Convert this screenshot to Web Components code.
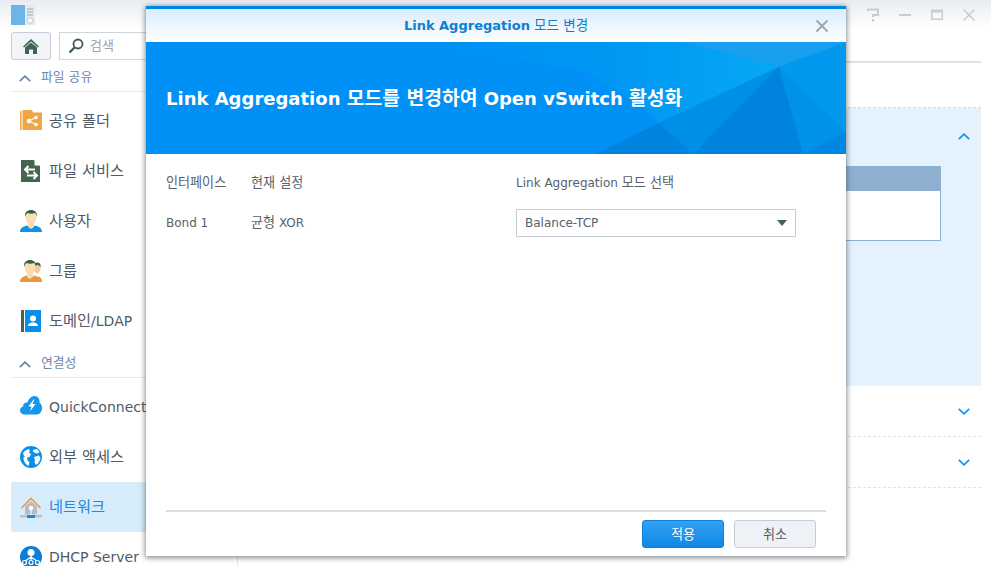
<!DOCTYPE html>
<html lang="ko">
<head>
<meta charset="utf-8">
<title>Link Aggregation</title>
<style>
html, body { margin: 0; height: 100%; overflow: hidden; background: #fff; }
body { font: 13px "DejaVu Sans", "Noto Sans CJK KR", sans-serif; color: #4f5b66; }
</style>
</head>
<body>
<dsm-window>
  <dsm-sidebar slot="side">
    <nav-section>파일 공유</nav-section>
    <nav-item icon="folder"><ko-t>공유 폴더</ko-t></nav-item>
    <nav-item icon="service"><ko-t>파일 서비스</ko-t></nav-item>
    <nav-item icon="user"><ko-t>사용자</ko-t></nav-item>
    <nav-item icon="group"><ko-t>그룹</ko-t></nav-item>
    <nav-item icon="domain"><ko-t>도메인</ko-t>/LDAP</nav-item>
    <nav-section>연결성</nav-section>
    <nav-item icon="cloud">QuickConnect</nav-item>
    <nav-item icon="globe"><ko-t>외부 액세스</ko-t></nav-item>
    <nav-item icon="house" active><ko-t>네트워크</ko-t></nav-item>
    <nav-item icon="dhcp">DHCP Server</nav-item>
  </dsm-sidebar>
  <dsm-main slot="main"></dsm-main>
</dsm-window>

<mode-dialog>
  <span slot="title"><b>Link Aggregation</b> <ko-t>모드 변경</ko-t></span>
  <span slot="banner">Link Aggregation <ko-t>모드를 변경하여</ko-t> Open vSwitch <ko-t>활성화</ko-t></span>
  <bond-form></bond-form>
  <dsm-button slot="footer" primary><ko-t>적용</ko-t></dsm-button>
  <dsm-button slot="footer"><ko-t>취소</ko-t></dsm-button>
</mode-dialog>

<script>
const icons = {
  folder: `<path fill="#f0a547" d="M0 1h1.500v19H0zM2.500 0h9l2 2.500H22V20H2.500z"/><g fill="#fff"><circle cx="9" cy="11" r="2.300"/><circle cx="16" cy="7.500" r="1.800"/><circle cx="16" cy="14.500" r="1.800"/><path d="M9 10.300 16 7v1.300l-7 3.300zM9 10.500l7 3.400v1.200l-7-3.400z"/></g>`,
  service: `<path fill="#44654f" d="M1 0h13l6 6v16H1z"/><path fill="#fff" d="M14.500 0 20 5.500h-5.500z"/><path fill="none" stroke="#fff" stroke-width="2" d="M5 9.500h10M8.500 6l-3.500 3.500L8.500 13M17 15.500H7M13.500 12l3.500 3.500-3.500 3.500"/>`,
  user: `<path fill="#0a93e8" d="M0 22c0-4 3-5.500 7-6.500l4 2.500 4-2.500c4 1 7 2.500 7 6.500z"/><path fill="#fcdcb4" d="M5.500 6c0-4 2.500-5 5.500-5s5.500 1 5.500 5c0 4-2 9-5.500 9.500C7.500 15 5.500 10 5.500 6z"/><path fill="#fcdcb4" d="M8 13h6v4l-3 2-3-2z"/><path fill="#3b5f4a" d="M5 7c-.5-5 2.500-7 6-7s6.500 2 6 7c-.5-2-1-3.500-2-4-2 1-5.500 1-7.500 0-1 .7-2 2-2.500 4z"/>`,
  group: `<path fill="#e8973f" d="M13 22c.5-3 2-5 5-5.500 2.500 .5 4 2 4 5.500z"/><path fill="#f7c896" d="M14 7.500c0-3 1.500-4 3.500-4s3 1.500 3 4-1.500 6-3 6-3.500-3-3.500-6z"/><path fill="#3b5f4a" d="M14 6c.5-3 2-4 4-3.500s3 2 2.500 4.500c-1-1.500-2-2-3.500-2z"/><path fill="#e8973f" d="M0 22c0-4 3-5.500 6.500-6.500l4 2 4-2c2 .6 3.500 1.500 4.500 3v3.500z"/><path fill="#fcdcb4" d="M4.500 6c0-4 2.500-5 5.500-5s5.500 1 5.500 5-2 9-5.500 9.500C6.500 15 4.500 10 4.500 6z"/><path fill="#fcdcb4" d="M7 13h6v4l-3 2-3-2z"/><path fill="#3b5f4a" d="M4 7C3.500 2 6.500 0 10 0s6.500 2 6 7c-.5-2-1-3.500-2-4-2 1-5.500 1-7.500 0-1 .7-2 2-2.500 4z"/>`,
  domain: `<path fill="#44654f" d="M1 0h3v22H1z"/><path fill="#0a8fe8" d="M5 0h16v22H5z"/><circle cx="13" cy="8.500" r="3" fill="#fff"/><path fill="#fff" d="M8 16c0-2.500 2-3 3.500-3.500h3C16 13 18 13.500 18 16z"/>`,
  cloud: `<path fill="#1598ea" d="M4.500 18.500C2 18.500 0 16.800 0 14.500c0-2 1.200-3.500 3-4C3 7.500 5.500 6 7.500 6.500 8.500 3 11 0 14.500 0c3.500 0 5.500 3 5 6.500C21 7.500 22 9.500 22 12c0 3.500-2 6.500-5 6.500z"/><path fill="#fff" d="M13.500 3.500 8.500 10.500h3l-1.500 5 5.500-7.500h-3l2-4.500z"/>`,
  globe: `<circle cx="11" cy="11" r="11" fill="#0a8fe8"/><path fill="#fff" d="M4 5.500 8.500 3l1.500 1.500-1 2 2 1.500-1.500 3-2.500 .5.500 3 2 1.500-1 4C5 18 3 14 3.500 11l1.500 0L3 8zM13 4l4-1 2.500 3-2 1.500-2.500-.5-2-1.500zM14 11l5-1.500 1.500 2.500c-.5 3-2 5-4 7l-2-2 .5-3z"/>`,
  house: `<path fill="#b6bcc4" d="M5 10.500 11 5l6 5.500v8H5z"/><path fill="none" stroke="#ef9a3c" stroke-width="1.700" d="M1.500 12 11 2.500l9.500 9.500"/><circle cx="11" cy="12" r="2.200" fill="#fff"/><path fill="#fff" d="M10.500 13h1v6h-1z"/><path fill="#bfc4ca" d="M0 19h22v2.500H0z"/><path fill="#0a8fe8" d="M7 19h8v3.500H7z"/>`,
  dhcp: `<circle cx="11" cy="11" r="11" fill="#0a7fd8"/><circle cx="11" cy="6.500" r="3.500" fill="#fff"/><path fill="none" stroke="#fff" stroke-width="1.200" d="M11 9v6M11 11 4.500 15.500M11 11l6.500 4.500"/><g fill="#0a7fd8" stroke="#fff" stroke-width="1.200"><circle cx="4.500" cy="16.500" r="2"/><circle cx="11" cy="16.500" r="2"/><circle cx="17.500" cy="16.500" r="2"/></g>`
};

const chevron = (up, color, size) => `<svg width="${size}" height="${Math.round(size * 0.6)}" viewBox="0 0 12 7"><path fill="none" stroke="${color}" stroke-width="1.800" d="${up ? 'M.8 6.200 6 1.200l5.200 5' : 'M.8 .8 6 5.800l5.200-5'}"/></svg>`;

// hangul runs a touch wider than the latin next to them
class KoT extends HTMLElement {
  connectedCallback() {
    const sR = this.attachShadow({ mode: 'open' });
    sR.innerHTML = `<style>:host { display: inline; font-size: var(--ko-size, 1.09em); }</style><slot></slot>`;
  }
}

class DsmWindow extends HTMLElement {
  connectedCallback() {
    const sR = this.attachShadow({ mode: 'open' });
    sR.innerHTML = `
    <style>
    :host { display: flex; flex-direction: column; height: 566px; width: 991px; overflow: hidden; }
    .bar { display: flex; align-items: flex-start; height: 28px; flex: none; padding-left: 11px;
      background: linear-gradient(#e8ecf2, #fff); }
    .app { width: 24px; height: 20px; margin-top: 5px; flex: none; }
    .ctl { margin-left: auto; display: flex; gap: 16px; padding: 8px 14px 0 0; }
    .ctl svg { display: block; }
    .row { display: flex; flex: 1; min-height: 0; }
    </style>
    <div class="bar">
      <svg class="app" viewBox="0 0 24 20"><path fill="#6cb4ea" d="M0 0h14v20H0z"/><path fill="#e6eaee" d="M14 0h10v20H14z"/><path stroke="#9aa5ae" d="M16 4h6M16 7h6M16 10h6"/><circle cx="19" cy="15.500" r="2.800" fill="#f7f9fa" stroke="#c5ccd2"/></svg>
      <div class="ctl">
        <svg width="16" height="14" viewBox="0 0 16 14" fill="none" stroke="#c9cdd1" stroke-width="2"><path d="M3 3V1.500h10V7H8v2M8 11v2.500"/></svg>
        <svg width="16" height="14" viewBox="0 0 16 14"><path stroke="#c9cdd1" stroke-width="2" d="M2 7h12"/></svg>
        <svg width="16" height="14" viewBox="0 0 16 14" fill="none" stroke="#c9cdd1"><path stroke-width="3" d="M2 3h12"/><path stroke-width="1.500" d="M2.700 2v9.300h10.600V2"/></svg>
        <svg width="16" height="14" viewBox="0 0 16 14"><path stroke="#c9cdd1" stroke-width="1.600" d="M2.500 1.500 13.500 12.500M13.500 1.500 2.500 12.500"/></svg>
      </div>
    </div>
    <div class="row"><slot name="side"></slot><slot name="main"></slot></div>`;
  }
}

class DsmSidebar extends HTMLElement {
  connectedCallback() {
    const sR = this.attachShadow({ mode: 'open' });
    sR.innerHTML = `
    <style>
    :host { display: block; width: 238px; flex: none; box-sizing: border-box; padding-left: 11px; overflow: hidden; border-right: 1px solid #e3e6ea; }
    .tools { display: flex; gap: 8px; padding-top: 4px; height: 28px; }
    .home { width: 38px; height: 26px; border: 1px solid #c6ced8; border-radius: 3px; background: #f1f5f9;
      display: flex; align-items: center; justify-content: center; }
    .search { flex: 1; margin-right: 8px; height: 26px; border: 1px solid #cfd5db; display: flex; align-items: center; gap: 6px; padding-left: 8px; font-size: 13px; color: #9aa3ab; line-height: 16px; }
    </style>
    <div class="tools">
      <div class="home"><svg width="16" height="15" viewBox="0 0 16 15"><path fill="#3f6350" d="M8 0 16 7.500l-1 1L8 2.500 1 8.500l-1-1z"/><path fill="#3f6350" d="M8 3.500 14 8.500V15H10V10.500H6V15H2V8.500z"/></svg></div>
      <div class="search"><svg width="16" height="16" viewBox="0 0 16 16"><circle cx="10" cy="6" r="4.500" fill="none" stroke="#3f5e4f" stroke-width="1.800"/><path stroke="#3f5e4f" stroke-width="2.400" d="M6.500 9.500 1.500 14.500"/></svg><span>검색</span></div>
    </div>
    <slot></slot>`;
  }
}

class NavSection extends HTMLElement {
  connectedCallback() {
    const sR = this.attachShadow({ mode: 'open' });
    sR.innerHTML = `
    <style>
    :host { display: flex; align-items: center; gap: 10px; height: 32px; box-sizing: border-box; padding: 3px 0 0 8px; margin-bottom: 4px;
      border-bottom: 1px solid #e6e8eb; font-size: 12.800px; color: #6c87ab; line-height: 16px; }
    svg { margin-top: 2px; }
    </style>
    ${chevron(true, '#6c87ab', 12)}<slot></slot>`;
  }
}

class NavItem extends HTMLElement {
  connectedCallback() {
    const sR = this.attachShadow({ mode: 'open' });
    sR.innerHTML = `
    <style>
    :host { display: flex; align-items: center; gap: 7px; height: 50px; padding-left: 9px; border-radius: 3px 0 0 3px;
      font-size: 14px; line-height: 18px; color: #4f5b66; white-space: nowrap; }
    :host([active]) { background: #d6ecfb; color: #1a8be0; }
    svg { flex: none; }
    .t { display: block; }
    </style>
    <svg width="22" height="22" viewBox="0 0 22 22">${icons[this.getAttribute('icon')] || ''}</svg><span class="t"><slot></slot></span>`;
  }
}

class DsmMain extends HTMLElement {
  connectedCallback() {
    const sR = this.attachShadow({ mode: 'open' });
    sR.innerHTML = `
    <style>
    :host { display: block; flex: 1; min-width: 0; padding-right: 10px; }
    .top { height: 33px; border-bottom: 2px solid #dde0e4; }
    .tabs { height: 44px; border-bottom: 1px dashed #d6d9dd; }
    .open { height: 278px; background: #e3f2fd; box-sizing: border-box; padding: 58px 40px 0 20px; position: relative; }
    .grid { height: 75px; box-sizing: border-box; border: 1px solid #8fb0d2; background: #fff; }
    .grid div { height: 24px; background: #8fafd0; }
    .row { height: 50px; border-bottom: 1px dashed #e3e4e8; display: flex; align-items: center; justify-content: flex-end; padding-right: 11px; }
    .chev { position: absolute; right: 11px; top: 20px; }
    </style>
    <div class="top"></div>
    <div class="tabs"></div>
    <div class="open"><span class="chev">${chevron(true, '#1a96ee', 12)}</span><div class="grid"><div></div></div></div>
    <div class="row">${chevron(false, '#1a96ee', 12)}</div>
    <div class="row">${chevron(false, '#1a96ee', 12)}</div>`;
  }
}

class ModeDialog extends HTMLElement {
  connectedCallback() {
    const sR = this.attachShadow({ mode: 'open' });
    sR.innerHTML = `
    <style>
    :host { position: absolute; left: 146px; top: 6px; width: 700px; height: 550px; display: flex; flex-direction: column;
      background: #fff; box-shadow: 0 1px 5px 1px rgba(60, 66, 72, .6); }
    .title { flex: none; height: 33px; box-sizing: content-box; border-top: 3px solid #0086e5; display: flex; align-items: center; justify-content: center;
      background: linear-gradient(#d8ecfc, #fff); color: #0b7fd6; font-size: 13px; position: relative; --ko-size: 1.04em; line-height: 16px; }
    .close { position: absolute; right: 17px; top: 10px; }
    .banner { flex: none; height: 112px; position: relative; display: flex; align-items: center; padding-left: 20px;
      background: #0090f6; color: #fff; font-size: 18px; font-weight: bold; overflow: hidden; line-height: 22px; --ko-size: 1.07em; }
    .banner svg { position: absolute; left: 0; top: 0; }
    .banner span { position: relative; top: 1px; }
    .body { flex: 1; padding: 0 20px; }
    .foot { flex: none; margin: 0 20px; height: 36px; border-top: 2px solid #dadde1; display: flex; justify-content: flex-end;
      align-items: flex-start; gap: 10px; padding: 8px 10px 0 0; }
    </style>
    <div class="title"><slot name="title"></slot>
      <svg class="close" width="14" height="14" viewBox="0 0 14 14"><path stroke="#a2a8ad" stroke-width="2" d="M1.500 1.500 12.500 12.500M12.500 1.500 1.500 12.500"/></svg>
    </div>
    <div class="banner">
      <svg width="700" height="112" viewBox="0 0 700 112">
        <defs><linearGradient id="lite" x1="0" y1="0" x2="1" y2="0"><stop offset="0" stop-color="#0090f6"/><stop offset=".55" stop-color="#0098f3"/><stop offset="1" stop-color="#06a8f4"/></linearGradient></defs>
        <path fill="url(#lite)" d="M280 0H537L633 25 513 81 497 65 440 30z"/>
        <path fill="#18a0ee" d="M537 0H700L633 25z"/>
        <path fill="#0099ee" d="M633 25 700 0V90z"/>
        <path fill="#0092e9" d="M633 25 700 90 657 112z"/>
        <path fill="#008fe6" d="M513 81 633 25 547 112z"/>
        <path fill="#0083dd" d="M633 25 657 112H547z"/>
        <path fill="#0083dd" d="M513 81 547 112H450z"/>
        <path fill="#0087df" d="M657 112 700 90V112z"/>
      </svg>
      <span><slot name="banner"></slot></span>
    </div>
    <div class="body"><slot></slot></div>
    <div class="foot"><slot name="footer"></slot></div>`;
  }
}

class BondForm extends HTMLElement {
  connectedCallback() {
    const sR = this.attachShadow({ mode: 'open' });
    sR.innerHTML = `
    <style>
    :host { display: grid; grid-template-columns: 85px 265px 280px; grid-template-rows: 55px 28px; align-items: center;
      font-size: 12px; color: #56616b; line-height: 16px; }
    .head { padding-top: 2px; }
    .sel { height: 28px; box-sizing: border-box; border: 1px solid #c7ccd3; display: flex; align-items: center;
      justify-content: space-between; padding: 0 8px; }
    .arrow { width: 0; height: 0; border: 5px solid transparent; border-top: 6px solid #44654f; border-bottom: 0; }
    </style>
    <div class="head"><ko-t>인터페이스</ko-t></div><div class="head"><ko-t>현재 설정</ko-t></div><div class="head">Link Aggregation <ko-t>모드 선택</ko-t></div>
    <div>Bond 1</div><div><ko-t>균형</ko-t> XOR</div>
    <div class="sel"><span>Balance-TCP</span><i class="arrow"></i></div>`;
  }
}

class DsmButton extends HTMLElement {
  connectedCallback() {
    const sR = this.attachShadow({ mode: 'open' });
    sR.innerHTML = `
    <style>
    :host { display: flex; align-items: center; justify-content: center; width: 82px; height: 28px; box-sizing: border-box; padding-top: 2px;
      border: 1px solid #c5ced8; border-radius: 3px; background: #eef2f7; color: #4f5b66; font-size: 12px; line-height: 16px; }
    :host([primary]) { background: linear-gradient(#33a0f4, #0f87e6); border-color: #0f7fd8; color: #fff; }
    </style>
    <slot></slot>`;
  }
}

customElements.define('ko-t', KoT);
customElements.define('dsm-window', DsmWindow);
customElements.define('dsm-sidebar', DsmSidebar);
customElements.define('nav-section', NavSection);
customElements.define('nav-item', NavItem);
customElements.define('dsm-main', DsmMain);
customElements.define('mode-dialog', ModeDialog);
customElements.define('bond-form', BondForm);
customElements.define('dsm-button', DsmButton);
</script>
</body>
</html>
